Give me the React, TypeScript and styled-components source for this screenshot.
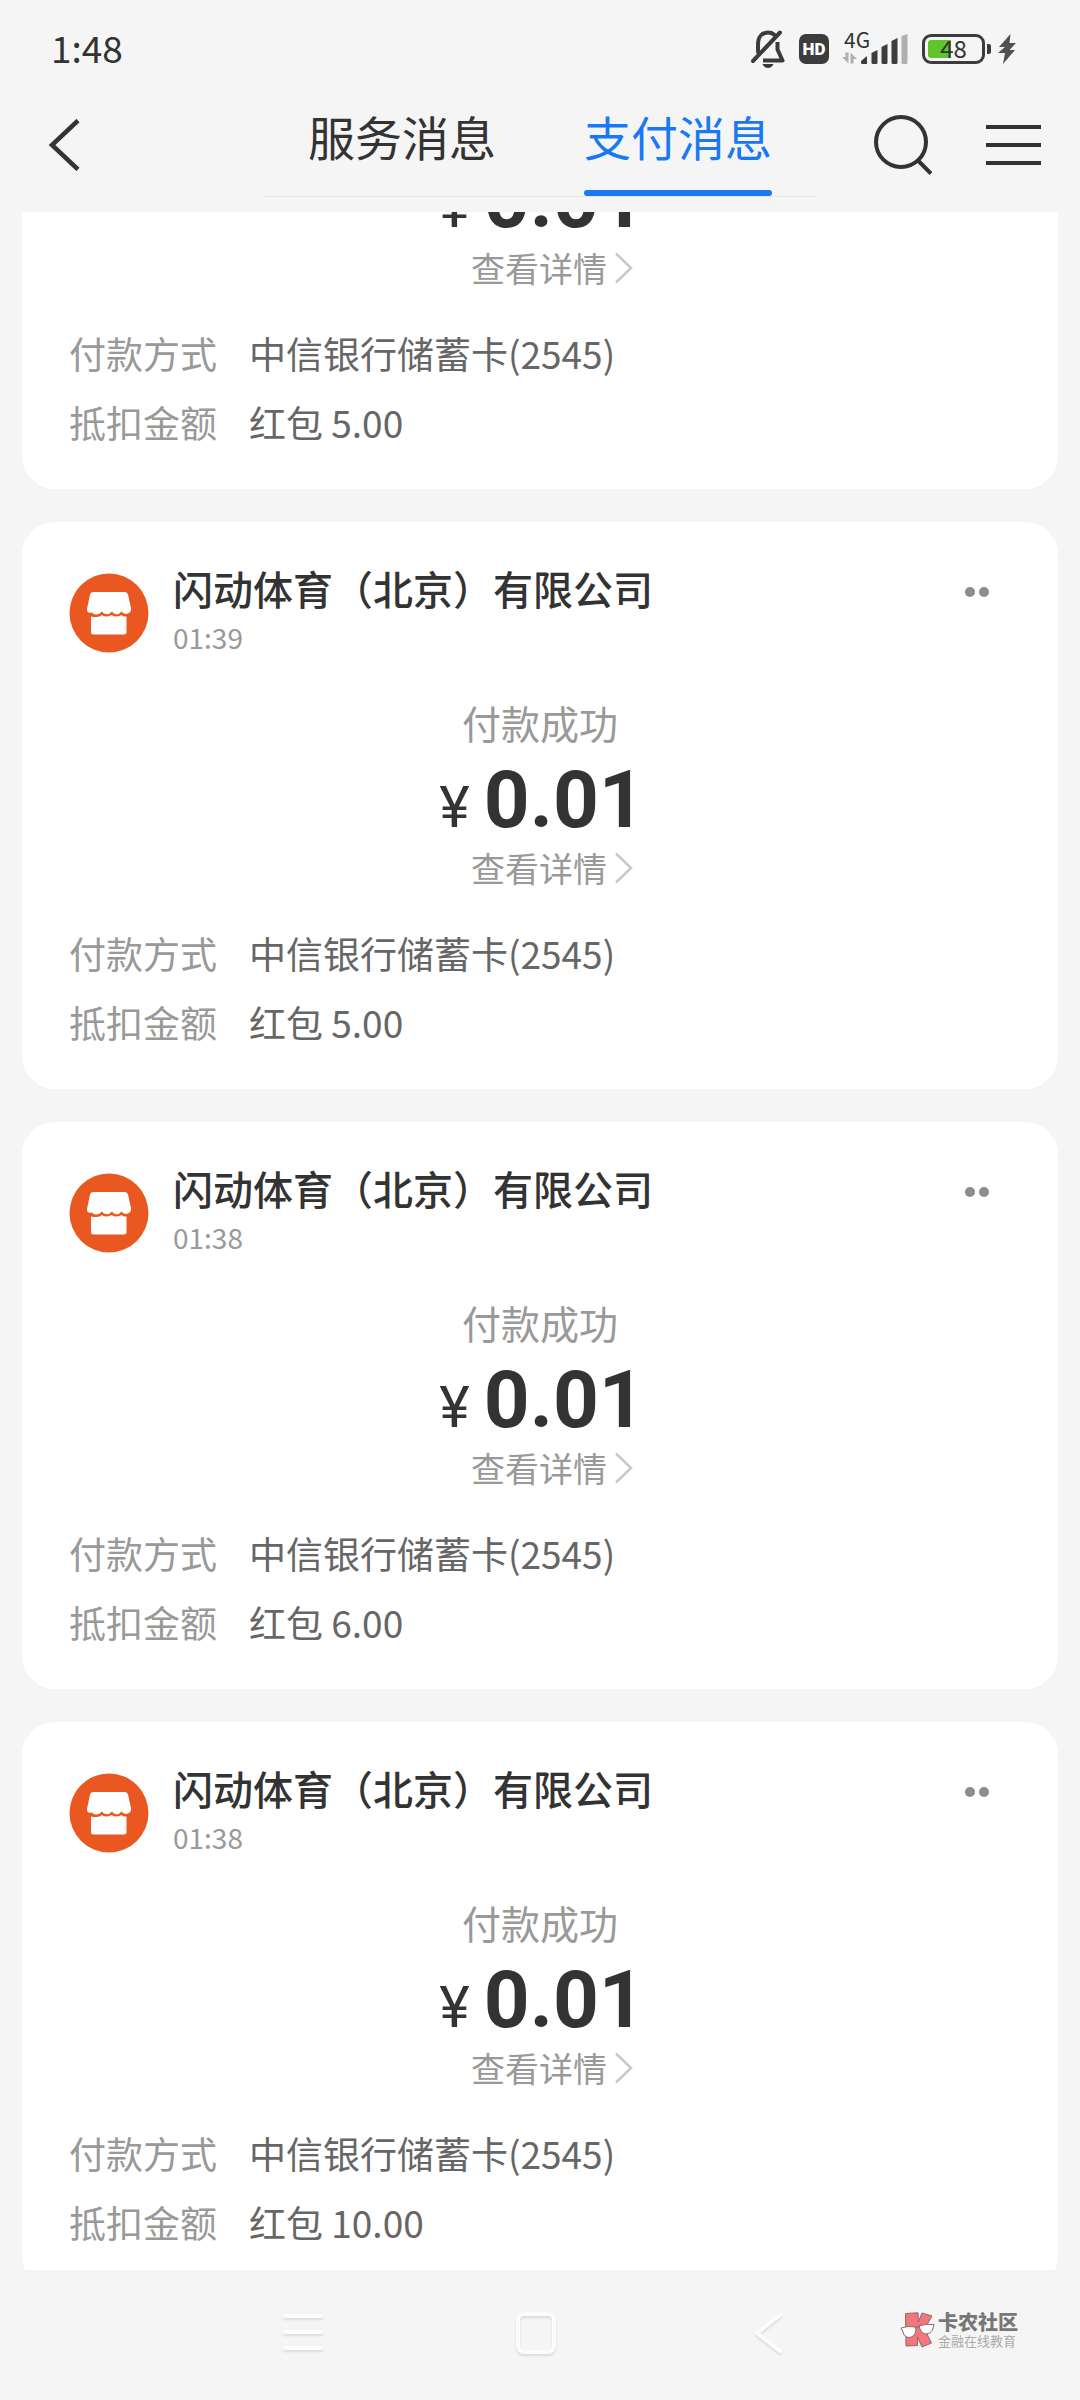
import React, { useLayoutEffect, useRef } from "react";
import styled, { createGlobalStyle } from "styled-components";

const GlobalStyle = createGlobalStyle`
  *, *::before, *::after { box-sizing: border-box; }
  body {
    margin: 0;
    background: #f5f5f5;
    color: #333333;
    font-family: "Noto Sans CJK SC", sans-serif;
  }
  button {
    margin: 0;
    padding: 0;
    border: 0;
    background: none;
    color: inherit;
    font: inherit;
    cursor: pointer;
  }
  a { color: inherit; text-decoration: none; }
  dl, dt, dd, h2, p { margin: 0; font-weight: 400; }
  svg { display: block; flex: none; }
`;

const Screen = styled.div`
  display: flex;
  flex-direction: column;
  height: 100vh;
`;

const StatusBar = styled.div`
  display: flex;
  align-items: center;
  justify-content: space-between;
  flex: none;
  height: 98px;
  padding: 0 64px 0 51px;
`;

const Clock = styled.time`
  padding-bottom: 5px;
  font-size: 37px;
  line-height: 48px;
`;

const StatusIcons = styled.div`
  display: flex;
  align-items: center;
`;

const HdBadge = styled.span`
  display: flex;
  align-items: center;
  justify-content: center;
  width: 30px;
  height: 30px;
  margin: 0 13px 0 14px;
  border-radius: 7px;
  background: #3c3c3c;
  color: #ffffff;
  font-family: Roboto, sans-serif;
  font-size: 17px;
  font-weight: 900;
  line-height: 30px;
`;

const Signal = styled.div`
  position: relative;
  width: 66px;
  height: 30px;
  margin-right: 14px;
`;

const NetworkType = styled.span`
  position: absolute;
  left: 2px;
  top: -7px;
  font-size: 21px;
  line-height: 24px;
`;

const Battery = styled.div`
  position: relative;
  width: 63px;
  height: 30px;
  padding: 3px;
  border: 3px solid #3c3c3c;
  border-radius: 9px;
`;

const BatteryLevel = styled.div`
  width: 23px;
  height: 18px;
  border-radius: 3px 0 0 3px;
  background: #5fc52b;
`;

const BatteryText = styled.span`
  position: absolute;
  inset: 0;
  font-size: 24px;
  line-height: 22px;
  text-align: center;
`;

const BatteryCap = styled.div`
  width: 4px;
  height: 10px;
  margin: 0 7px 0 2px;
  border-radius: 0 2px 2px 0;
  background: #3c3c3c;
`;

const Header = styled.header`
  display: grid;
  grid-template-columns: 1fr 552px 1fr;
  flex: none;
  height: 114px;
`;

const BackButton = styled.button`
  display: flex;
  align-items: center;
  height: 94px;
  padding-left: 48px;
`;

const Tabs = styled.div`
  display: flex;
  height: 99px;
  border-bottom: 1px solid #e8e8e8;
`;

const Tab = styled.button<{ $active?: boolean }>`
  display: flex;
  flex: 1;
  flex-direction: column;
  align-items: center;
  justify-content: space-between;
  padding-top: 3px;
  color: ${(p) => (p.$active ? "#1a78f2" : "#333333")};
  font-size: 47px;
  line-height: 70px;

  &::after {
    content: "";
    width: 188px;
    height: 6px;
    border-radius: 3px;
    background: ${(p) => (p.$active ? "#1a78f2" : "transparent")};
  }
`;

const Actions = styled.div`
  display: flex;
  align-items: center;
  justify-content: flex-end;
  gap: 54px;
  height: 93px;
  padding-right: 39px;
`;

const Feed = styled.main`
  display: flex;
  flex: 1;
  flex-direction: column;
  gap: 33px;
  min-height: 0;
  padding: 0 22px;
  overflow-y: auto;
  scrollbar-width: none;
`;

const Card = styled.article<{ $continued?: boolean }>`
  flex: none;
  padding: ${(p) => (p.$continued ? "0" : "45px")} 47px 32px;
  border-radius: ${(p) => (p.$continued ? "0 0 33px 33px" : "33px")};
  background: #ffffff;
`;

const CardHeader = styled.div`
  display: flex;
  align-items: flex-start;
  gap: 24px;
`;

const Avatar = styled.div`
  flex: none;
  width: 80px;
  height: 80px;
  margin-top: 6px;
`;

const Merchant = styled.div`
  flex: 1;
`;

const MerchantName = styled.h2`
  font-size: 40px;
  font-weight: 500;
  line-height: 42px;
`;

const SentAt = styled.time`
  display: block;
  margin-top: 10px;
  color: #999999;
  font-size: 28px;
  line-height: 36px;
`;

const MoreButton = styled.button`
  display: flex;
  gap: 4px;
  padding: 20px 22px;
`;

const Dot = styled.span`
  width: 10px;
  height: 10px;
  border-radius: 50%;
  background: #8c8c8c;
`;

const PayState = styled.p`
  margin: 39px 0 6px;
  color: #999999;
  font-size: 39px;
  line-height: 56px;
  text-align: center;
`;

const Amount = styled.p`
  display: flex;
  align-items: baseline;
  justify-content: center;
  gap: 14px;
  height: 84px;
  padding-left: 4px;
  font-family: Roboto, sans-serif;
  font-size: 80px;
  font-weight: 700;
  line-height: 88px;
`;

const Currency = styled.span`
  font-size: 58px;
  font-weight: 400;
  line-height: 60px;
`;

const DetailLink = styled.a`
  display: flex;
  align-items: center;
  justify-content: center;
  gap: 8px;
  margin-top: 6px;
  padding-left: 24px;
  color: #999999;
  font-size: 34px;
  line-height: 44px;
`;

const Facts = styled.dl`
  display: grid;
  grid-template-columns: auto 1fr;
  column-gap: 32px;
  margin-top: 29px;
  font-size: 37px;
  line-height: 69px;
`;

const FactName = styled.dt`
  color: #999999;
`;

const FactValue = styled.dd`
  color: #666666;
`;

const NavBar = styled.nav`
  position: relative;
  display: flex;
  align-items: flex-start;
  justify-content: center;
  flex: none;
  gap: 193px;
  height: 130px;
  padding: 41px 8px 0 0;
`;

const Watermark = styled.div`
  position: absolute;
  top: 41px;
  right: 62px;
  display: flex;
  align-items: center;
  gap: 3px;
`;

const WatermarkText = styled.div`
  display: flex;
  flex-direction: column;
`;

const WatermarkName = styled.span`
  color: #777777;
  font-size: 20px;
  font-weight: 900;
  line-height: 22px;
`;

const WatermarkMotto = styled.span`
  color: #aaaaaa;
  font-size: 13px;
  line-height: 16px;
`;

const MutedBellIcon = () => (
  <svg width="34" height="38" viewBox="0 0 34 38" fill="none" stroke="#3c3c3c" strokeWidth="4">
    <path d="M7 22V14.500C7 7 11 2.500 17 2.500C19.500 2.500 21.500 3.200 23 4.500" strokeLinecap="round" />
    <path d="M26.500 12V19.500L31.500 30.500H12" strokeLinejoin="round" />
    <path d="M2 31L29 2.500" strokeLinecap="round" />
    <path d="M11.500 34H22.500C21.500 36.500 19.500 38 17 38S12.500 36.500 11.500 34Z" fill="#3c3c3c" stroke="none" />
  </svg>
);

const SignalIcon = () => (
  <svg width="66" height="30" viewBox="0 0 66 30" fill="#3c3c3c">
    <path d="M3.500 18.500H6.500V29.500L0 23H3.500ZM8.500 29.500V18.500L15 25H11.500V29.500Z" fill="#b0b0b0" />
    <path d="M19 27L25 22V30H20.500Q19 30 19 28.500Z" />
    <path d="M29.500 19L35.500 16V28.500Q35.500 30 34 30H31Q29.500 30 29.500 28.500Z" />
    <path d="M39.500 13L45.500 10V28.500Q45.500 30 44 30H41Q39.500 30 39.500 28.500Z" />
    <path d="M49.500 7L55.500 4V28.500Q55.500 30 54 30H51Q49.500 30 49.500 28.500Z" />
    <path d="M59.500 2L65.500 0V28.500Q65.500 30 64 30H61Q59.500 30 59.500 28.500Z" fill="#b0b0b0" />
  </svg>
);

const BoltIcon = () => (
  <svg width="18" height="30" viewBox="0 0 18 30" fill="#505050">
    <path d="M12.500 0L1 13H7L0 19H7L5 30L17 16H11.500L18 9H11.500Z" />
  </svg>
);

const BackIcon = () => (
  <svg width="32" height="52" viewBox="0 0 32 52" fill="none" stroke="#333333" strokeWidth="4.500">
    <path d="M30 1.500L4 26L30 50.500" />
  </svg>
);

const SearchIcon = () => (
  <svg width="58" height="60" viewBox="0 0 58 60" fill="none" stroke="#333333" strokeWidth="4">
    <circle cx="27" cy="27" r="25" />
    <path d="M44.500 46L57 58.500" />
  </svg>
);

const MenuIcon = () => (
  <svg width="55" height="40" viewBox="0 0 55 40" stroke="#333333" strokeWidth="4">
    <path d="M0 2H55M0 20H55M0 38H55" />
  </svg>
);

const ShopIcon = () => (
  <svg width="80" height="80" viewBox="0 0 80 80">
    <circle cx="40" cy="40" r="39.500" fill="#e95820" />
    <path
      d="M24 19H56Q58.500 19 59 21.500L62 35Q62.500 39 59 40.500Q55 42 52.500 38.500Q50 42 46.500 41Q44.500 40.500 43 38.500Q40 42 36.500 41Q34.500 40.500 33 38.500Q30 42 26 41.500Q24 41 23 39.500Q18 41 18 36L21 21.500Q21.500 19 24 19Z"
      fill="#ffffff"
    />
    <path
      d="M22 43.500Q25 44 27.500 44Q31 44 33 42Q37 45 42.500 42Q47 45 52.500 42Q54 44 57.500 43.500V59Q57.500 61.500 55 61.500H24.500Q22 61.500 22 59Z"
      fill="#ffffff"
    />
  </svg>
);

const ChevronIcon = () => (
  <svg width="18" height="32" viewBox="0 0 18 32" fill="none" stroke="#c8c8c8" strokeWidth="2.500">
    <path d="M1 1.500L16 16L1 30.500" />
  </svg>
);

const NavIcon = styled.svg`
  overflow: visible;
  fill: none;
  stroke: #fcfcfc;
  stroke-width: 4px;
  stroke-linecap: round;
  stroke-linejoin: round;
  filter: drop-shadow(0 2px 1px rgba(0, 0, 0, 0.1));
`;

const CommunityLogo = () => (
  <svg width="35" height="36" viewBox="0 0 35 36" stroke="#8a6a6c" strokeWidth="1">
    <path d="M5.500 1.500L18 .8L18.300 10L22 1L32 4L24.500 17L31.500 31L22 35L17.500 25V33.500L6 34Z" fill="#f4757c" />
    <path d="M1 16Q8 13.500 15.500 15L16 18Q15 25 9 25.500Q4 25 3 20Z" fill="#ffffff" />
    <path d="M19 13.800Q26 11.500 34 12.500L32.500 18Q30 22.500 25.500 22Q20.500 21 19 13.800Z" fill="#ffffff" />
    <path d="M15.500 16Q17 14 19.200 15" fill="none" />
  </svg>
);

type Payment = {
  id: number;
  time: string;
  discount: string;
  /** The upper part has scrolled out of the feed and is not rendered. */
  continued?: boolean;
};

const payments: Payment[] = [
  { id: 1, time: "01:39", discount: "5.00", continued: true },
  { id: 2, time: "01:39", discount: "5.00" },
  { id: 3, time: "01:38", discount: "6.00" },
  { id: 4, time: "01:38", discount: "10.00" },
];

const PaymentCard = ({ time, discount, continued }: Payment) => (
  <Card $continued={continued}>
    {!continued && (
      <>
        <CardHeader>
          <Avatar>
            <ShopIcon />
          </Avatar>
          <Merchant>
            <MerchantName>闪动体育（北京）有限公司</MerchantName>
            <SentAt>{time}</SentAt>
          </Merchant>
          <MoreButton type="button" aria-label="更多">
            <Dot />
            <Dot />
          </MoreButton>
        </CardHeader>
        <PayState>付款成功</PayState>
      </>
    )}
    <Amount>
      <Currency>¥</Currency>0.01
    </Amount>
    <DetailLink href="#detail">
      查看详情
      <ChevronIcon />
    </DetailLink>
    <Facts>
      <FactName>付款方式</FactName>
      <FactValue>中信银行储蓄卡(2545)</FactValue>
      <FactName>抵扣金额</FactName>
      <FactValue>红包 {discount}</FactValue>
    </Facts>
  </Card>
);

const INITIAL_SCROLL = 56;

export default function App() {
  const feed = useRef<HTMLElement>(null);

  useLayoutEffect(() => {
    if (feed.current) feed.current.scrollTop = INITIAL_SCROLL;
  }, []);

  return (
    <Screen>
      <GlobalStyle />
      <StatusBar>
        <Clock>1:48</Clock>
        <StatusIcons>
          <MutedBellIcon />
          <HdBadge>HD</HdBadge>
          <Signal>
            <NetworkType>4G</NetworkType>
            <SignalIcon />
          </Signal>
          <Battery>
            <BatteryLevel />
            <BatteryText>48</BatteryText>
          </Battery>
          <BatteryCap />
          <BoltIcon />
        </StatusIcons>
      </StatusBar>

      <Header>
        <BackButton type="button" aria-label="返回">
          <BackIcon />
        </BackButton>
        <Tabs role="tablist">
          <Tab type="button" role="tab" aria-selected={false}>
            服务消息
          </Tab>
          <Tab type="button" role="tab" aria-selected $active>
            支付消息
          </Tab>
        </Tabs>
        <Actions>
          <button type="button" aria-label="搜索">
            <SearchIcon />
          </button>
          <button type="button" aria-label="菜单">
            <MenuIcon />
          </button>
        </Actions>
      </Header>

      <Feed ref={feed}>
        {payments.map((payment) => (
          <PaymentCard key={payment.id} {...payment} />
        ))}
      </Feed>

      <NavBar>
        <button type="button" aria-label="最近任务">
          <NavIcon width="40" height="44" viewBox="0 0 40 44">
            <path d="M2 5H38M2 21H38M2 37H38" />
          </NavIcon>
        </button>
        <button type="button" aria-label="主屏幕">
          <NavIcon width="40" height="44" viewBox="0 0 40 44">
            <rect x="2" y="3" width="36" height="38" rx="6" />
          </NavIcon>
        </button>
        <button type="button" aria-label="后退">
          <NavIcon width="40" height="44" viewBox="0 0 40 44">
            <path d="M31 4L8 22L31 40" />
          </NavIcon>
        </button>
        <Watermark>
          <CommunityLogo />
          <WatermarkText>
            <WatermarkName>卡农社区</WatermarkName>
            <WatermarkMotto>金融在线教育</WatermarkMotto>
          </WatermarkText>
        </Watermark>
      </NavBar>
    </Screen>
  );
}
